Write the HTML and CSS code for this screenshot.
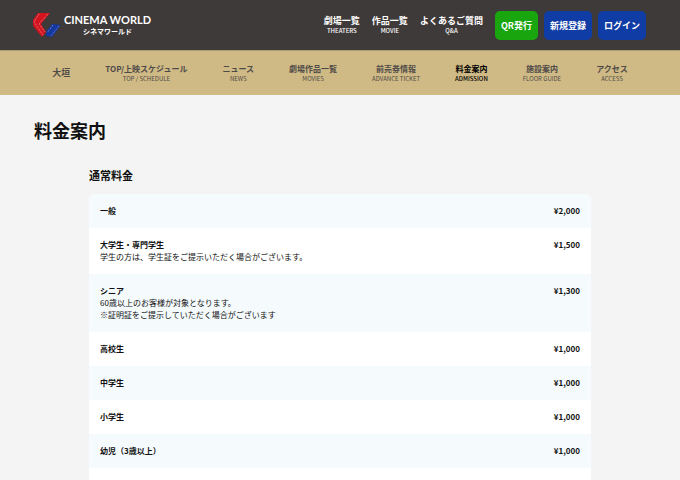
FILE: index.html
```html
<!DOCTYPE html>
<html lang="ja">
<head>
    <meta charset="UTF-8">
    <meta name="viewport" content="width=device-width, initial-scale=1.0">
    <title>料金案内 | シネマワールド</title>
    <link rel="stylesheet" href="styles.css">
</head>
<body>
    <header class="header">
        <a href="#" class="logo">
            <svg class="logo-mark" viewBox="0 0 28 24" aria-hidden="true">
                <path fill="#d3141f" d="M5 0h12L8 11l5 8-4 5L0 13V7z"/>
                <path fill="#1437a0" d="M19 11l9 1-9 12-6-1v-4z"/>
                <path fill="none" stroke="#f0b5b8" stroke-width=".7" stroke-dasharray="1 1" d="M6 1L1 9l9 13M15 1L6 11l6 8"/>
                <path fill="none" stroke="#9fb0e0" stroke-width=".7" stroke-dasharray="1 1" d="M20 12l-6 8M26 13l-8 10"/>
            </svg>
            <span class="logo-text">
                <span class="logo-en">CINEMA WORLD</span>
                <span class="logo-ja">シネマワールド</span>
            </span>
        </a>
        <nav class="header-nav">
            <a href="#">劇場一覧<span class="sub">THEATERS</span></a>
            <a href="#">作品一覧<span class="sub">MOVIE</span></a>
            <a href="#">よくあるご質問<span class="sub">Q&amp;A</span></a>
        </nav>
        <div class="header-buttons">
            <button type="button" class="btn btn-green">QR発行</button>
            <button type="button" class="btn">新規登録</button>
            <button type="button" class="btn">ログイン</button>
        </div>
    </header>

    <nav class="theater-nav">
        <a href="#" class="theater-name">大垣</a>
        <a href="#">TOP/上映スケジュール<span class="sub">TOP / SCHEDULE</span></a>
        <a href="#">ニュース<span class="sub">NEWS</span></a>
        <a href="#">劇場作品一覧<span class="sub">MOVIES</span></a>
        <a href="#">前売券情報<span class="sub">ADVANCE TICKET</span></a>
        <a href="#" class="current">料金案内<span class="sub">ADMISSION</span></a>
        <a href="#">施設案内<span class="sub">FLOOR GUIDE</span></a>
        <a href="#">アクセス<span class="sub">ACCESS</span></a>
    </nav>

    <main class="main">
        <h1>料金案内</h1>
        <section class="price">
            <h2 id="regular">通常料金</h2>
            <table class="price-table" aria-labelledby="regular">
                <tr>
                    <th scope="row">一般</th>
                    <td>¥2,000</td>
                </tr>
                <tr>
                    <th scope="row">大学生・専門学生<p>学生の方は、学生証をご提示いただく場合がございます。</p></th>
                    <td>¥1,500</td>
                </tr>
                <tr>
                    <th scope="row">シニア<p>60歳以上のお客様が対象となります。<br>※証明証をご提示していただく場合がございます</p></th>
                    <td>¥1,300</td>
                </tr>
                <tr>
                    <th scope="row">高校生</th>
                    <td>¥1,000</td>
                </tr>
                <tr>
                    <th scope="row">中学生</th>
                    <td>¥1,000</td>
                </tr>
                <tr>
                    <th scope="row">小学生</th>
                    <td>¥1,000</td>
                </tr>
                <tr>
                    <th scope="row">幼児（3歳以上）</th>
                    <td>¥1,000</td>
                </tr>
                <tr class="price-end">
                    <td colspan="2"></td>
                </tr>
            </table>
        </section>
    </main>
</body>
</html>
```
FILE: styles.css
```css
body {
    margin: 0;
    background-color: #f4f4f4;
    color: #111;
    font-family: "Noto Sans CJK JP", sans-serif;
    font-size: 8px;
    line-height: 12px;
}
a {
    color: inherit;
    text-decoration: none;
}
.header {
    display: flex;
    align-items: center;
    height: 50px;
    padding: 0 34px 0 33px;
    background-color: #3e3a39;
    color: #fff;
}
.logo {
    display: flex;
    align-items: center;
    gap: 3px;
    margin-right: auto;
}
.logo-mark {
    width: 28px;
    height: 24px;
}
.logo-text {
    display: flex;
    flex-direction: column;
    align-items: center;
}
.logo-en {
    font-family: Lato, sans-serif;
    font-size: 11px;
    font-weight: bold;
    line-height: 12px;
}
.logo-ja {
    font-size: 7px;
    font-weight: bold;
    line-height: 10px;
}
.header-nav {
    display: flex;
    gap: 12px;
    margin-right: 12px;
    font-size: 9px;
    font-weight: bold;
    text-align: center;
}
.sub {
    display: block;
    font-size: 6px;
    font-weight: normal;
    line-height: 8px;
}
.header-nav .sub {
    font-weight: 500;
}
.header-buttons {
    display: flex;
    gap: 6px;
}
.btn {
    height: 29px;
    padding: 0 6px;
    border: none;
    border-radius: 5px;
    background-color: #103ca5;
    color: #fff;
    font-family: inherit;
    font-size: 9px;
    font-weight: bold;
    cursor: pointer;
}
.btn-green {
    background-color: #18a50e;
}
.theater-nav {
    display: flex;
    justify-content: center;
    align-items: center;
    gap: 35px;
    height: 44px;
    border-top: 1px solid #aa9c76;
    background-color: #cfba85;
    color: #4f4b48;
    font-weight: bold;
    text-align: center;
    white-space: nowrap;
}
.theater-name {
    font-size: 9px;
}
.current {
    color: #000;
}
.current .sub {
    font-weight: 500;
}
.main {
    padding: 22px 34px 0;
}
h1 {
    margin: 0;
    font-size: 18px;
    line-height: 26px;
}
.price {
    margin: 24px 55px 0;
}
h2 {
    margin: 0 0 11px;
    font-size: 11px;
    line-height: 16px;
}
.price-table {
    width: 100%;
    border-collapse: collapse;
    border-radius: 6px 6px 0 0;
    overflow: hidden;
    background-color: #fff;
}
.price-table tr:nth-child(odd) {
    background-color: #f5fafd;
}
.price-table th,
.price-table td {
    padding: 11px;
    vertical-align: top;
    font-weight: bold;
    text-align: left;
}
.price-table td {
    text-align: right;
}
.price-table .price-end td {
    padding: 6px 11px;
}
.price-table p {
    margin: 0;
    font-weight: normal;
}
```
